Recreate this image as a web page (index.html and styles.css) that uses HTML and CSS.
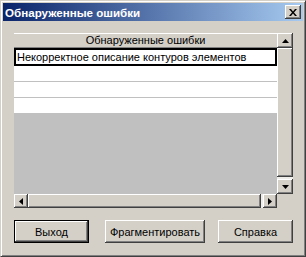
FILE: index.html
```html
<!DOCTYPE html>
<html lang="ru">
<head>
    <meta charset="UTF-8">
    <title>Обнаруженные ошибки</title>
    <link rel="stylesheet" href="styles.css">
</head>
<body>
    <div class="window">
        <div class="titlebar">
            <span class="title">Обнаруженные ошибки</span>
            <button class="close-btn">
                <svg width="8" height="7" viewBox="0 0 8 7">
                    <path d="M0 0h2l2 2.5L6 0h2L5 3.5 8 7H6L4 4.5 2 7H0l3-3.5z" fill="#000"/>
                </svg>
            </button>
        </div>

        <div class="content">
            <div class="grid">
                <div class="table">
                    <div class="head">Обнаруженные ошибки</div>
                    <div class="row selected">Некорректное описание контуров элементов</div>
                    <div class="row"></div>
                    <div class="row"></div>
                    <div class="row"></div>
                </div>

                <div class="vscroll">
                    <div class="sb-btn">
                        <svg width="7" height="4" viewBox="0 0 7 4"><path d="M3.5 0L7 4H0z" fill="#000"/></svg>
                    </div>
                    <div class="thumb"></div>
                    <div class="sb-btn">
                        <svg width="7" height="4" viewBox="0 0 7 4"><path d="M0 0h7L3.5 4z" fill="#000"/></svg>
                    </div>
                </div>

                <div class="hscroll">
                    <div class="sb-btn">
                        <svg width="4" height="7" viewBox="0 0 4 7"><path d="M0 3.5L4 0v7z" fill="#000"/></svg>
                    </div>
                    <div class="thumb"></div>
                    <div class="sb-btn">
                        <svg width="4" height="7" viewBox="0 0 4 7"><path d="M0 0l4 3.5L0 7z" fill="#000"/></svg>
                    </div>
                </div>
                <div class="corner"></div>
            </div>

            <div class="buttons">
                <button class="btn default">Выход</button>
                <button class="btn wide">Фрагментировать</button>
                <button class="btn">Справка</button>
            </div>
        </div>
    </div>
</body>
</html>
```

FILE: styles.css
```css
* {
    box-sizing: border-box;
}

body {
    margin: 0;
    background: #d4d0c8;
    font-family: "Liberation Sans", Arial, sans-serif;
    font-size: 11px;
}

.window {
    width: 306px;
    height: 257px;
    background: #d4d0c8;
    border-top: 1px solid #d4d0c8;
    border-left: 1px solid #d4d0c8;
    border-right: 1px solid #404040;
    border-bottom: 1px solid #404040;
    box-shadow: inset 1px 1px #fff, inset -1px -1px #808080;
    padding: 2px;
    display: flex;
    flex-direction: column;
}

.titlebar {
    height: 18px;
    background: linear-gradient(to right, #0a246a, #a6caf0);
    display: flex;
    align-items: center;
    justify-content: space-between;
    padding: 0 2px 0 2px;
}

.title {
    color: #fff;
    font-weight: bold;
    font-size: 11.6px;
}

.close-btn {
    width: 16px;
    height: 14px;
    padding: 0;
    border: none;
    background: #d4d0c8;
    box-shadow: inset -1px -1px #404040, inset 1px 1px #fff, inset -2px -2px #808080;
    display: flex;
    align-items: center;
    justify-content: center;
}

.content {
    padding: 12px 8px 0 11px;
}

.grid {
    display: grid;
    grid-template-columns: 263px 16px;
    grid-template-rows: 161px 14px;
}

.table {
    background: #c0c0c0;
    overflow: hidden;
}

.head {
    height: 15px;
    background: #d4d0c8;
    border-top: 1px solid #fff;
    border-bottom: 1px solid #808080;
    text-align: center;
    line-height: 13px;
    color: #000;
}

.row {
    height: 16px;
    background: #fff;
    border-bottom: 1px solid #c0c0c0;
    padding-left: 3px;
    line-height: 15px;
    white-space: nowrap;
}

.row.selected {
    height: 18px;
    border: 2px solid #000;
    padding-left: 1px;
    line-height: 14px;
}

.vscroll {
    display: flex;
    flex-direction: column;
    background: #eeedea;
}

.hscroll {
    display: flex;
    background: #eeedea;
}

.sb-btn {
    flex: none;
    width: 16px;
    height: 15px;
    background: #d4d0c8;
    box-shadow: inset -1px -1px #404040, inset 1px 1px #fff, inset -2px -2px #808080;
    display: flex;
    align-items: center;
    justify-content: center;
}

.hscroll .sb-btn {
    width: 14px;
    height: 14px;
}

.thumb {
    flex: 1;
    background: #d4d0c8;
    box-shadow: inset -1px -1px #404040, inset 1px 1px #fff, inset -2px -2px #808080;
}

.vscroll .thumb {
    margin-bottom: 2px;
}

.hscroll .thumb {
    margin-right: 2px;
}

.corner {
    background: #d4d0c8;
}

.buttons {
    display: flex;
    margin-top: 12px;
}

.btn {
    width: 75px;
    height: 23px;
    padding: 0;
    border: none;
    background: #d4d0c8;
    box-shadow: inset -1px -1px #404040, inset 1px 1px #fff, inset -2px -2px #808080;
    font-family: "Liberation Sans", Arial, sans-serif;
    font-size: 11px;
    color: #000;
}

.btn.default {
    border: 1px solid #000;
}

.btn.wide {
    width: 100px;
    margin-left: 16px;
    margin-right: 13px;
}
```
